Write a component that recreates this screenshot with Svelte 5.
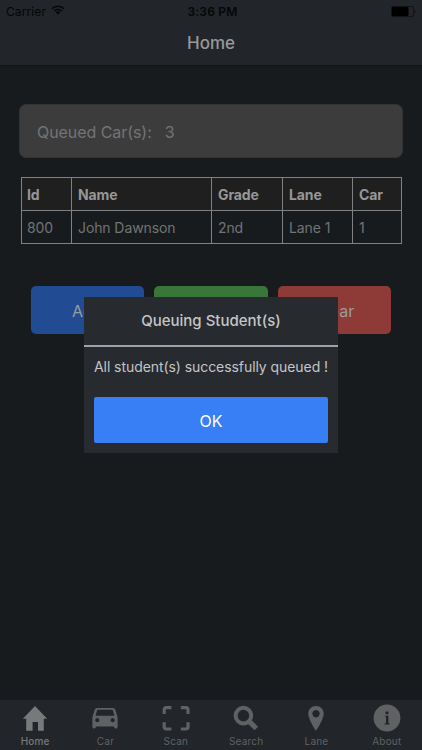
<script>
  const columns = ['Id', 'Name', 'Grade', 'Lane', 'Car'];
  const rows = [['800', 'John Dawnson', '2nd', 'Lane 1', '1']];
  const tabs = ['Home', 'Car', 'Scan', 'Search', 'Lane', 'About'];
  const active = 'Home';
</script>

<div class="phone">
  <header>
    <div class="status">
      <div class="carrier">
        <span>Carrier</span>
        <svg width="14" height="10" viewBox="0 0 14 10">
          <path d="M1 3.8A8.5 8.5 0 0 1 13 3.8M3.2 6A5.4 5.4 0 0 1 10.8 6" fill="none" stroke="#050607" stroke-width="1.6" />
          <path d="M4.8 7.2Q7 5.5 9.2 7.2L7 9.6Z" fill="#050607" />
        </svg>
      </div>
      <span class="time">3:36 PM</span>
      <svg class="battery" width="26" height="11" viewBox="0 0 26 11">
        <rect x=".5" y=".5" width="22" height="10" rx="1.6" fill="none" stroke="#121417" />
        <rect x="1" y="1" width="16.5" height="9" rx="1" fill="#000" />
        <path d="M23.7 3.5Q25.2 5.5 23.7 7.5Z" fill="#08090a" />
      </svg>
    </div>
    <h1>Home</h1>
  </header>

  <main>
    <div class="count"><span>Queued Car(s):</span><span>3</span></div>

    <table>
      <colgroup>
        <col class="c-id" /><col class="c-name" /><col class="c-grade" /><col class="c-lane" /><col class="c-car" />
      </colgroup>
      <thead>
        <tr>{#each columns as c}<th>{c}</th>{/each}</tr>
      </thead>
      <tbody>
        {#each rows as row}
          <tr>{#each row as cell}<td>{cell}</td>{/each}</tr>
        {/each}
      </tbody>
    </table>

    <div class="actions">
      <button class="add">Add</button>
      <button class="queue" aria-label="Queue"></button>
      <button class="clear">Clear</button>
    </div>
  </main>

  <nav>
    {#each tabs as tab}
      <div class="tab" class:active={tab === active}>
        <svg width="28" height="28" viewBox="0 0 28 28" fill="currentColor">
          {#if tab === 'Home'}
            <path d="M14 2 26.2 14.7H22.8V26.8H17V18H11.6V26.8H5.2V14.7H1.8Z" />
          {:else if tab === 'Car'}
            <path fill-rule="evenodd" d="M5.9 4H22.1Q23.7 4 24.2 5.5L26.6 13.2V23Q26.6 24.6 24.9 24.6T23.2 23V22.4H4.8V23Q4.8 24.6 3.1 24.6T1.4 23V13.2L3.8 5.5Q4.3 4 5.9 4ZM6.3 5.8 4.5 11.8H23.5L21.7 5.8ZM6.3 14.1a2.1 2.1 0 1 0 .01 0ZM21.7 14.1a2.1 2.1 0 1 0 .01 0Z" />
          {:else if tab === 'Scan'}
            <path d="M2.2 10V5.8Q2.2 3.6 4.4 3.6H9.4M18.8 3.6H23.8Q26 3.6 26 5.8V10M26 18.3V22.8Q26 25 23.8 25H18.8M9.4 25H4.4Q2.2 25 2.2 22.8V18.3" fill="none" stroke="currentColor" stroke-width="3.2" />
          {:else if tab === 'Search'}
            <circle cx="11.4" cy="11.6" r="7.8" fill="none" stroke="currentColor" stroke-width="4" />
            <path d="M16.6 16.8 24.3 24.5" fill="none" stroke="currentColor" stroke-width="5.2" />
          {:else if tab === 'Lane'}
            <path fill-rule="evenodd" d="M14 2C9.5 2 6.3 5.2 6.3 9.7 6.3 15.5 14 26.7 14 26.7S21.7 15.5 21.7 9.7C21.7 5.2 18.5 2 14 2ZM14 6a3.7 3.7 0 1 1-.01 0Z" />
          {:else}
            <circle cx="14" cy="14" r="13.4" />
            <circle cx="14" cy="8.8" r="1.6" fill="#202327" />
            <path d="M11.8 11.7H15.4V19.3L16.7 19.6V20.4H11.6V19.6L13 19.3V12.8L11.8 12.5Z" fill="#202327" />
          {/if}
        </svg>
        <span>{tab}</span>
      </div>
    {/each}
  </nav>

  <div class="dialog" role="alertdialog" aria-label="Queuing Student(s)">
    <h2>Queuing Student(s)</h2>
    <div class="body">
      <p>All student(s) successfully queued !</p>
      <button>OK</button>
    </div>
  </div>
</div>

<style>
  :global(body) { background: #171b1e; }
  .phone {
    position: relative;
    display: flex;
    flex-direction: column;
    width: 422px;
    height: 750px;
    overflow: hidden;
    background: #171b1e;
    color: #737476;
    font-family: Inter, "Liberation Sans", sans-serif;
    box-sizing: border-box;
  }
  * { box-sizing: border-box; }
  button { font: inherit; border: 0; padding: 0; margin: 0; white-space: nowrap; }
  h1, h2, p { margin: 0; }
  header {
    height: 65px;
    flex: none;
    background: #222529;
    box-shadow: 0 1px 1px #121518;
  }
  .status {
    display: grid;
    grid-template-columns: 1fr auto 1fr;
    align-items: center;
    height: 22px;
    padding: 0 5px 0 6px;
    color: #050607;
    font-size: 12px;
    white-space: nowrap;
  }
  .carrier { display: flex; align-items: center; gap: 5px; letter-spacing: .1px; }
  .carrier svg { margin-top: -2px; }
  .time { font-weight: 600; letter-spacing: .2px; margin-left: 2px; }
  .battery { justify-self: end; }
  h1 {
    height: 43px;
    line-height: 43px;
    text-align: center;
    color: #97999a;
    font-size: 17px;
    font-weight: 500;
    letter-spacing: -.05px;
  }
  main { flex: 1; padding: 39px 19px 0; }
  .count {
    display: flex;
    align-items: center;
    gap: 13px;
    height: 54px;
    padding: 2px 17px 0;
    border: 1px solid #313334;
    border-radius: 7px;
    background: #3c3c3c;
    font-size: 16px;
    letter-spacing: -.06px;
  }
  table {
    width: 381px;
    margin: 19px 0 0 2px;
    border-collapse: collapse;
    table-layout: fixed;
    font-size: 14px;
  }
  .c-id { width: 50px; }
  .c-name { width: 140px; }
  .c-grade { width: 71px; }
  .c-lane { width: 70px; }
  .c-car { width: 49px; }
  tr { height: 33px; }
  th, td {
    height: 33px;
    padding: 0 0 0 6px;
    border: 1px solid #808182;
    text-align: left;
    white-space: nowrap;
    font-weight: 400;
    letter-spacing: -.1px;
  }
  th:first-child, td:first-child { padding-left: 5px; }
  th { background: #1f1f1f; color: #979797; font-weight: 700; }
  .actions { display: flex; gap: 10px; margin: 42px 0 0 11.5px; }
  .actions button {
    width: 113.5px;
    height: 48px;
    padding-top: 1px;
    border-radius: 5px;
    color: #9a9ca0;
    font-size: 16px;
  }
  .actions .add { background: #214c94; }
  .actions .queue { background: #3a7639; }
  .actions .clear { background: #8e3a37; }
  nav {
    display: flex;
    height: 50px;
    flex: none;
    background: #222529;
  }
  .tab {
    flex: 1;
    display: flex;
    flex-direction: column;
    align-items: center;
    padding-top: 4px;
    color: #606163;
    font-size: 10px;
    line-height: 12px;
    letter-spacing: .2px;
  }
  .tab span { margin-top: 3px; }
  .tab.active { color: #78797a; }
  .tab.active span { font-weight: 500; }
  .dialog {
    position: absolute;
    left: 84px;
    top: 297px;
    width: 254px;
    height: 156px;
    background: #272a2f;
    color: #c4c5c7;
    text-align: center;
  }
  .dialog h2 {
    height: 50px;
    border-bottom: 2px solid #a0a2a5;
    line-height: 48px;
    font-size: 15px;
    font-weight: 500;
  }
  .body { padding: 10px; }
  .body p { height: 40px; line-height: 20px; font-size: 14px; letter-spacing: -.07px; white-space: nowrap; }
  .body button {
    width: 234px;
    height: 46px;
    padding-top: 2px;
    border-radius: 2px;
    background: #387ef5;
    color: #fff;
    font-size: 16px;
  }
</style>
